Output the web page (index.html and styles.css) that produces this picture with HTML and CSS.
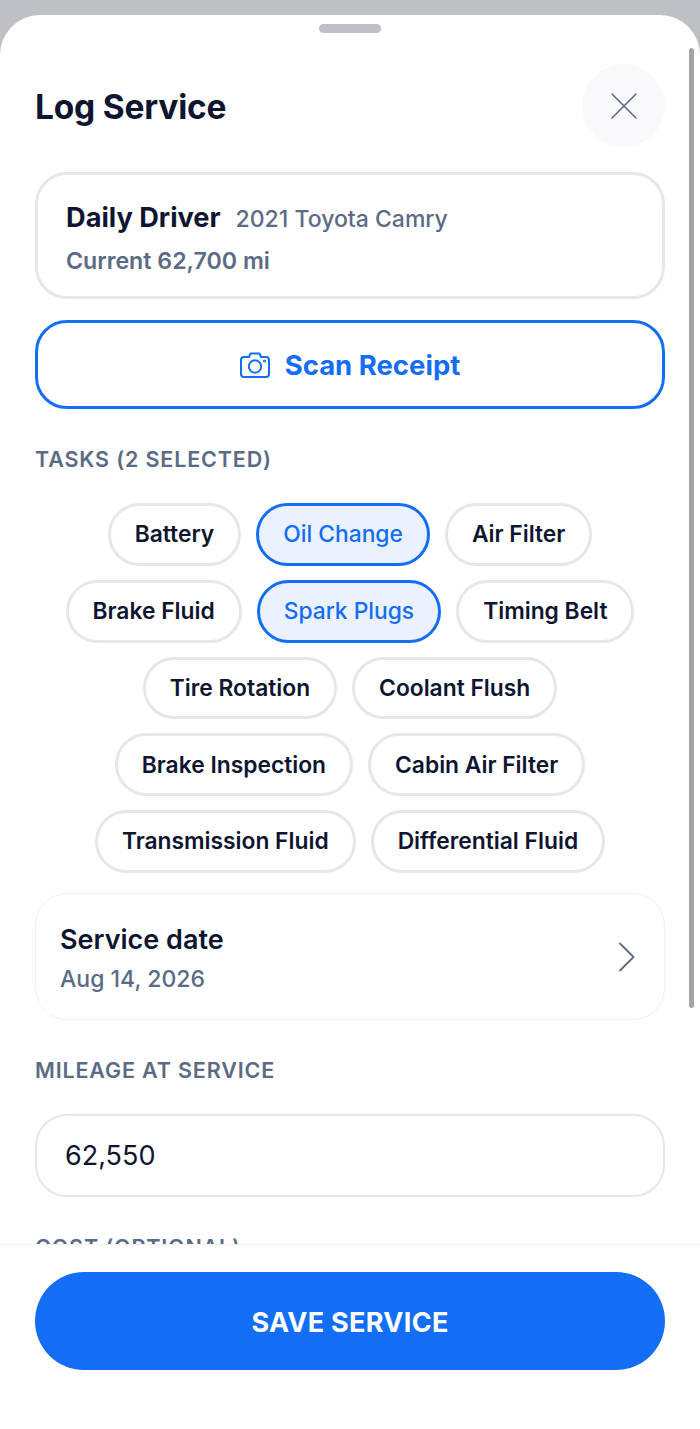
FILE: index.html
```html
<!DOCTYPE html>
<html lang="en">

<head>
    <meta charset="UTF-8">
    <meta name="viewport" content="width=device-width, initial-scale=1.0">
    <title>Log Service</title>
    <link rel="stylesheet" href="styles.css">
</head>

<body>

    <div class="sheet">
        <div class="handle"></div>
        <div class="scrollbar"></div>

        <div class="sheet-body">
            <!-- Header -->
            <div class="sheet-header">
                <h1>Log Service</h1>
                <button class="close-btn" type="button" aria-label="Close">
                    <svg width="28" height="28" viewBox="0 0 28 28" fill="none" stroke="#5b6b85" stroke-width="1.6" stroke-linecap="round">
                        <path d="M2 2 L26 26 M26 2 L2 26" />
                    </svg>
                </button>
            </div>

            <!-- Vehicle -->
            <div class="vehicle-card">
                <div class="vehicle-line">
                    <span class="vehicle-name">Daily Driver</span>
                    <span class="vehicle-model">2021 Toyota Camry</span>
                </div>
                <div class="vehicle-mileage">Current 62,700 mi</div>
            </div>

            <button class="scan-btn" type="button">
                <svg width="30" height="26" viewBox="0 0 30 26" fill="none" stroke="#146ef5" stroke-width="2" stroke-linejoin="round">
                    <path d="M4 5 H9 L10.5 1.5 H19.5 L21 5 H26 Q29 5 29 8 V22 Q29 25 26 25 H4 Q1 25 1 22 V8 Q1 5 4 5 Z" />
                    <circle cx="15" cy="14.5" r="6.2" />
                    <circle cx="24.5" cy="9" r="0.6" />
                </svg>
                Scan Receipt
            </button>

            <!-- Tasks -->
            <div class="field-label tasks-label">TASKS (2 SELECTED)</div>
            <div class="chips">
                <span class="chip">Battery</span>
                <span class="chip active">Oil Change</span>
                <span class="chip">Air Filter</span>
                <span class="chip">Brake Fluid</span>
                <span class="chip active">Spark Plugs</span>
                <span class="chip">Timing Belt</span>
                <span class="chip">Tire Rotation</span>
                <span class="chip">Coolant Flush</span>
                <span class="chip">Brake Inspection</span>
                <span class="chip">Cabin Air Filter</span>
                <span class="chip">Transmission Fluid</span>
                <span class="chip">Differential Fluid</span>
            </div>

            <!-- Date -->
            <div class="date-row">
                <div class="date-text">
                    <div class="date-title">Service date</div>
                    <div class="date-value">Aug 14, 2026</div>
                </div>
                <svg width="18" height="30" viewBox="0 0 18 30" fill="none" stroke="#5b6b85" stroke-width="1.8" stroke-linecap="round" stroke-linejoin="round">
                    <path d="M2 1.5 L15.5 15 L2 28.5" />
                </svg>
            </div>

            <div class="field-label mileage-label">MILEAGE AT SERVICE</div>
            <div class="text-field">62,550</div>

            <div class="field-label cost-label">COST (OPTIONAL)</div>
        </div>

        <div class="sheet-footer">
            <button class="save-btn" type="button">SAVE SERVICE</button>
        </div>
    </div>

</body>

</html>
```

FILE: styles.css
```css
body {
    font-family: Inter, "Liberation Sans", sans-serif;
    margin: 0;
    height: 1429px;
    overflow: hidden;
    background-color: #bfc0c4;
    color: #0d1530;
}

button {
    font-family: inherit;
    cursor: pointer;
}

.sheet {
    position: relative;
    margin-top: 15px;
    height: 1414px;
    background-color: #fff;
    border-radius: 40px 40px 0 0;
    display: flex;
    flex-direction: column;
    overflow: hidden;
}

.handle {
    position: absolute;
    top: 9px;
    left: 319px;
    width: 62px;
    height: 9px;
    border-radius: 5px;
    background-color: #bfc0c4;
}

.scrollbar {
    position: absolute;
    top: 33px;
    left: 689px;
    width: 5px;
    height: 960px;
    border-radius: 3px;
    background-color: #a3a4a8;
}

.sheet-body {
    flex: 1;
    min-height: 0;
    overflow: hidden;
    padding: 49px 35px 0;
}

.sheet-header {
    display: flex;
    justify-content: space-between;
    align-items: center;
    margin-bottom: 25px;
}

h1 {
    margin: 0;
    padding-top: 2px;
    font-size: 33.5px;
    font-weight: 700;
    letter-spacing: -0.2px;
}

.close-btn {
    width: 83px;
    height: 83px;
    border: none;
    border-radius: 50%;
    background-color: #f9f9fb;
    display: flex;
    align-items: center;
    justify-content: center;
    padding: 0;
}

.vehicle-card {
    box-sizing: border-box;
    height: 127px;
    border: 3px solid #e6e7eb;
    border-radius: 32px;
    padding: 26px 28px 0;
    margin-bottom: 21px;
}

.vehicle-line {
    display: flex;
    align-items: baseline;
    gap: 15px;
}

.vehicle-name {
    font-size: 27.2px;
    font-weight: 700;
}

.vehicle-model {
    font-size: 23px;
    font-weight: 500;
    color: #5b6b85;
}

.vehicle-mileage {
    margin-top: 13px;
    font-size: 23.2px;
    font-weight: 600;
    color: #5b6b85;
}

.scan-btn {
    box-sizing: border-box;
    width: 100%;
    height: 89px;
    border: 3px solid #146ef5;
    border-radius: 32px;
    background-color: #fff;
    color: #146ef5;
    font-size: 27.5px;
    font-weight: 700;
    display: flex;
    align-items: center;
    justify-content: center;
    gap: 15px;
}

.field-label {
    font-size: 21.5px;
    font-weight: 600;
    letter-spacing: 0.85px;
    color: #5b6b85;
}

.tasks-label {
    margin-top: 37px;
    margin-bottom: 31px;
}

.chips {
    display: flex;
    flex-wrap: wrap;
    justify-content: center;
    gap: 14px 15px;
}

.chip {
    box-sizing: border-box;
    height: 62.75px;
    padding: 0 24px 1px;
    border: 3px solid #e6e7eb;
    border-radius: 32px;
    font-size: 22.8px;
    font-weight: 600;
    display: flex;
    align-items: center;
}

.chip.active {
    border-color: #146ef5;
    background-color: #ebf2fd;
    color: #146ef5;
    font-weight: 500;
}

.date-row {
    box-sizing: border-box;
    height: 127px;
    margin-top: 20.25px;
    padding: 0 28px 0 24px;
    border: 1.5px solid #f0f1f3;
    border-radius: 32px;
    display: flex;
    justify-content: space-between;
    align-items: center;
}

.date-text {
    padding-top: 3px;
}

.date-title {
    font-size: 27px;
    font-weight: 600;
}

.date-value {
    margin-top: 9px;
    font-size: 23px;
    font-weight: 500;
    color: #5b6b85;
}

.mileage-label {
    margin-top: 37px;
    margin-bottom: 31px;
}

.text-field {
    box-sizing: border-box;
    height: 83px;
    padding: 0 28px;
    border: 2px solid #e6e7eb;
    border-radius: 32px;
    font-size: 27px;
    display: flex;
    align-items: center;
}

.cost-label {
    margin-top: 37px;
}

.sheet-footer {
    height: 185px;
    box-sizing: border-box;
    flex-shrink: 0;
    padding: 27px 35px 0;
    background-color: #fff;
    border-top: 1.5px solid #f0f1f3;
}

.save-btn {
    width: 100%;
    height: 98px;
    padding-top: 3px;
    border: none;
    border-radius: 49px;
    background-color: #146ef5;
    color: #fff;
    font-size: 27px;
    font-weight: 700;
    letter-spacing: 0.3px;
}
```
